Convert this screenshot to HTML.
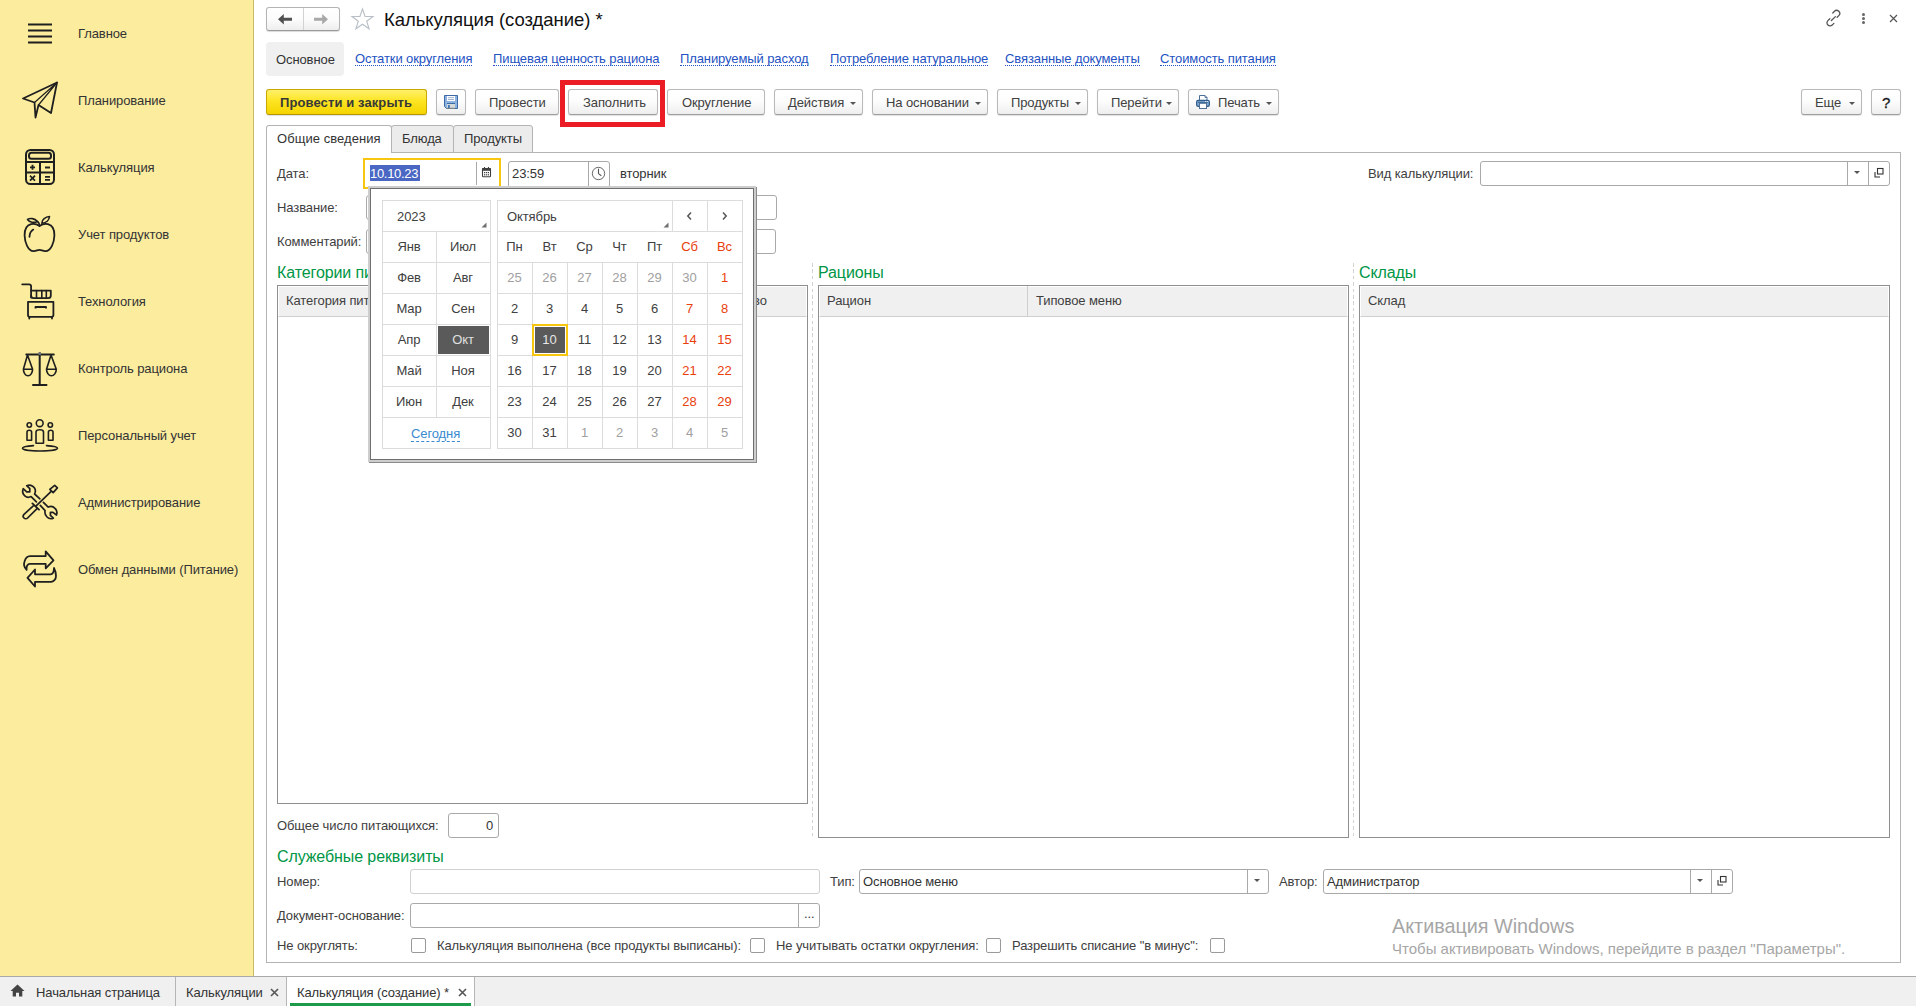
<!DOCTYPE html>
<html><head><meta charset="utf-8">
<style>
*{box-sizing:border-box;margin:0;padding:0}
html,body{width:1916px;height:1006px;overflow:hidden;background:#fff;font-family:"Liberation Sans",sans-serif;font-size:13px;color:#404040}
.a{position:absolute}
.t{position:absolute;white-space:nowrap;font-size:13px;line-height:15px;color:#404040;letter-spacing:-0.1px}
#side{position:absolute;left:0;top:0;width:254px;height:976px;background:#fbec9e;border-right:1px solid #c9b866}
.si{position:absolute;left:78px;font-size:13px;line-height:15px;color:#333;white-space:nowrap;letter-spacing:-0.1px}
.ico{position:absolute;left:20px;width:40px;height:40px}
.btn{position:absolute;top:89px;height:26px;border:1px solid #b9b9b9;border-bottom-color:#9d9d9d;border-radius:3px;background:linear-gradient(#ffffff 0%,#fdfdfd 45%,#eeeeee 100%);box-shadow:0 1px 1px rgba(0,0,0,.12)}
.btn span{position:absolute;top:5px;white-space:nowrap;font-size:13px;line-height:15px;color:#404040;letter-spacing:-0.1px}
.dd{position:absolute;top:12px;width:0;height:0;border-left:3px solid transparent;border-right:3px solid transparent;border-top:3px solid #555}
.lnk{position:absolute;top:51px;white-space:nowrap;font-size:13px;line-height:15px;color:#2452c2;letter-spacing:-0.1px;border-bottom:1px dotted #2452c2;height:15px}
.fld{position:absolute;border:1px solid #a9a9a9;border-radius:3px;background:#fff;height:24px}
.g{position:absolute;white-space:nowrap;font-size:16px;line-height:18px;color:#009646;letter-spacing:-0.1px}
.tbl{position:absolute;border:1px solid #8f8f8f;background:#fff}
.th{position:absolute;left:0;right:0;top:0;height:31px;background:#f0f0f0;border:1px solid #fff;border-bottom:1px solid #cfcfcf}
.cb{position:absolute;top:938px;width:15px;height:15px;border:1px solid #9a9a9a;border-radius:2px;background:#fff}
.dash{position:absolute;width:1px;background:repeating-linear-gradient(#d2d2d2 0 3.6px,transparent 3.6px 6.4px)}
</style></head><body>

<!-- SIDEBAR -->
<div id="side"></div>
<svg class="a" style="left:0;top:0" width="254" height="976" viewBox="0 0 254 976" fill="none" stroke="#1f1f1f" stroke-width="2" stroke-linejoin="round" stroke-linecap="round">
<!-- hamburger -->
<g stroke-width="1.8" stroke-linecap="butt"><path d="M28 24.5H52M28 30.5H52M28 36.5H52M28 42.5H52"/></g>
<!-- plane -->
<path d="M23 98.5L57 82.5L51 113L38.5 105L35.5 117.5L34.5 102.5Z" stroke-width="1.8"/>
<path d="M34.5 102.5L57 82.5M38.5 105L57 82.5" stroke-width="1.2"/>
<!-- calculator -->
<rect x="26" y="150" width="28" height="34" rx="4.5"/>
<rect x="29" y="152.8" width="22" height="6" rx="2.5"/>
<path d="M26 162H54M26 172.5H54M40 162V184"/>
<path d="M30 167.3H35M32.5 164.8V169.8M45 167.5H50M45 176.8H50M45 179.8H50" stroke-width="1.8" stroke-linecap="butt"/><path d="M30.6 176.3L34.4 180.1M34.4 176.3L30.6 180.1" stroke-width="1.7" stroke-linecap="square"/>
<!-- apple -->
<path d="M39.5 226C37 224.2 34 223.5 31 224.2C26.5 225.3 24.5 230 24.6 235.5C24.8 242.5 28 250.8 33.5 251.2C36 251.4 37.6 249.8 39.5 249.8C41.4 249.8 43 251.4 45.5 251.2C51 250.8 54.2 242.5 54.4 235.5C54.5 230 52.5 225.3 48 224.2C45 223.5 42 224.2 39.5 226Z" stroke-width="1.8"/>
<path d="M39.5 226C39.5 223.8 38.8 222.5 37.5 221.5" stroke-width="1.6"/>
<path d="M27.5 219.5C30 217.8 34.5 218.2 37.5 221.5C34 223.2 29.5 222.5 27.5 219.5Z" stroke-width="1.6"/>
<path d="M41.8 223.2C41.8 219.5 45.5 216.8 49.5 216.5C49.2 220.2 46.2 223 41.8 223.2Z" stroke-width="1.6"/>
<path d="M29.5 236.8C29.6 233.5 31 231 33.3 229.6" stroke-width="1.8"/>
<!-- technology -->
<path d="M22.2 284.3H29C30.3 284.3 31.1 285.2 31.1 286.5V297.5" stroke-width="1.8"/>
<path d="M31.1 290.6H50.8V295.5C50.8 297 49.8 298.2 48.2 298.2H33.6C32.2 298.2 31.1 297 31.1 295.5" stroke-width="1.8"/>
<path d="M36.5 290.6V298M41.8 290.6V298M46.3 290.6V298" stroke-width="1.6"/>
<path d="M28 301.8H53.4V315C53.4 316 52.6 316.8 51.6 316.8H29.8C28.8 316.8 28 316 28 315Z" stroke-width="1.8"/>
<path d="M29.3 316.8V318.5M52 316.8V318.5" stroke-width="1.8"/>
<path d="M35.5 308.5V307H46V308.5" stroke-width="1.8" stroke-linecap="butt"/>
<!-- scales -->
<path d="M39.7 353V384.5M33 385H46.5M26.3 354.5H53.8" stroke-width="2"/>
<path d="M27.5 355L23.4 369.3M27.5 355L32.6 369.3M23.4 369.3H32.6C32.6 372.8 30.5 375.8 28 375.8C25.5 375.8 23.4 372.8 23.4 369.3Z" stroke-width="1.6"/>
<path d="M51 355L46.5 369.3M51 355L56.3 369.3M46.5 369.3H56.3C56.3 372.8 54 375.8 51.4 375.8C48.8 375.8 46.5 372.8 46.5 369.3Z" stroke-width="1.6"/>
<circle cx="39.7" cy="353.5" r="1.6" fill="#777" stroke="none"/>
<!-- people -->
<circle cx="39.7" cy="423.2" r="3.4" stroke-width="1.6"/>
<circle cx="29.3" cy="425" r="2.2" stroke-width="1.6"/>
<circle cx="50.3" cy="425" r="2.2" stroke-width="1.6"/>
<path d="M36 443.3V432C36 430.5 37.5 429.8 39.8 429.8C42 429.8 43.5 430.5 43.5 432V443.3Z" stroke-width="1.6"/>
<path d="M27 440.3V432C27 431 28 430.3 29.3 430.3C30.6 430.3 31.6 431 31.6 432V440.3Z" stroke-width="1.6"/>
<path d="M48.4 440.3V432C48.4 431 49.4 430.3 50.7 430.3C52 430.3 53 431 53 432V440.3Z" stroke-width="1.6"/>
<path d="M33.5 445.6C26.5 446.1 22.5 447 22.5 448.2C22.5 449.8 30.3 451 40 451C49.7 451 57.5 449.8 57.5 448.2C57.5 447 53.5 446.1 46.5 445.6" stroke-width="1.6"/>
<!-- tools -->
<path d="M39.9 498.8L34.6 494C35.8 491.5 35.3 488.5 33.5 486.8C31.6 485 29 484.6 26.7 485.7L29.8 488.7V491.8H26.7L23.2 488.7C22.2 491.2 22.8 494 24.8 495.8C26.6 497.4 29 497.6 31.1 496.6L36.4 501.9" stroke-width="1.7"/>
<path d="M43.4 502.3L48.2 507.1C50.5 506 53.3 506.5 55 508.3C56.8 510.1 57.3 512.8 56.5 515L53 512.4H50.4V515.4L53.3 518.2C51.2 519.1 48.7 518.7 47 517C45.2 515.3 44.6 512.8 45.1 510.6L40.3 505.4" stroke-width="1.7"/>
<path d="M33.3 505.8L24 514.4C23 515.4 23 517 24 518C25 519 26.6 519 27.6 518L36.8 508.9" stroke-width="1.7"/>
<path d="M32.4 503.4L39 509.7" stroke-width="1.8"/>
<path d="M35.9 506.2L51.2 491.4" stroke-width="1.7"/>
<path d="M49.8 489.4L54.7 485.4L57.4 487.9L53.2 492.6Z" stroke-width="1.7"/>
<!-- exchange -->
<path d="M45.7 556.1V551.3L53.5 560.3L45.7 568.3V563.9H30C27.5 563.9 26.2 566.3 26.6 569.8C24.3 567.5 23.5 564.5 24.5 561.5C25.4 558.2 27.5 556.1 30 556.1Z" stroke-width="1.8"/>
<path d="M35 574.3V569.5L27.5 577.9L35 586.5V581.8H51C53.5 581.8 56 579.5 56 576C56 572.5 55 570 54 568C54 571.5 53 574.3 50.5 574.3Z" stroke-width="1.8"/>
</svg>
<div class="si" style="top:26px">Главное</div>
<div class="si" style="top:93px">Планирование</div>
<div class="si" style="top:160px">Калькуляция</div>
<div class="si" style="top:227px">Учет продуктов</div>
<div class="si" style="top:294px">Технология</div>
<div class="si" style="top:361px">Контроль рациона</div>
<div class="si" style="top:428px">Персональный учет</div>
<div class="si" style="top:495px">Администрирование</div>
<div class="si" style="top:562px">Обмен данными (Питание)</div>


<!-- TOP -->
<div id="top">
<!-- nav buttons -->
<div class="a" style="left:266px;top:7px;width:74px;height:24px;border:1px solid #b4b4b4;border-bottom-color:#9a9a9a;border-radius:3px;background:linear-gradient(#fff,#fcfcfc 50%,#eeeeee);box-shadow:0 1px 1px rgba(0,0,0,.15)"></div>
<div class="a" style="left:303px;top:8px;width:1px;height:22px;background:#d2d2d2"></div>
<svg class="a" style="left:276px;top:12px" width="20" height="14" viewBox="0 0 20 14"><path d="M2 7.3L7.8 2V5.8H16V8.8H7.8V12.6Z" fill="#505050"/></svg>
<svg class="a" style="left:312px;top:12px" width="20" height="14" viewBox="0 0 20 14"><path d="M16 7.3L10.2 2V5.8H2V8.8H10.2V12.6Z" fill="#a8a8a8"/></svg>
<!-- star -->
<svg class="a" style="left:350px;top:7px" width="26" height="25" viewBox="0 0 26 25"><path d="M12.5 2L15.1 9.5H23L16.7 14.2L19.1 21.8L12.5 17.2L5.9 21.8L8.3 14.2L2 9.5H9.9Z" fill="none" stroke="#b8bfc6" stroke-width="1.1" stroke-linejoin="miter"/></svg>
<div class="t" style="left:384px;top:9px;font-size:18.5px;line-height:22px;color:#111;letter-spacing:-0.05px">Калькуляция (создание) *</div>
<!-- top right icons -->
<svg class="a" style="left:1824px;top:9px" width="18.5" height="18.5" viewBox="0 0 20 20" fill="none" stroke="#555" stroke-width="1.4" stroke-linecap="round"><path d="M9.5 4.3L11.3 2.5C12.6 1.2 14.7 1.2 16 2.5C17.3 3.8 17.3 5.9 16 7.2L14.2 9"/><path d="M6.3 10.5L4.2 12.6C2.9 13.9 2.9 16 4.2 17.3C5.5 18.6 7.6 18.6 8.9 17.3L10.7 15.5"/><path d="M8 12.5L12.3 8.2"/></svg>
<div class="a" style="left:1862px;top:13px;width:3px;height:3px;border-radius:50%;background:#666"></div>
<div class="a" style="left:1862px;top:17px;width:3px;height:3px;border-radius:50%;background:#666"></div>
<div class="a" style="left:1862px;top:21px;width:3px;height:3px;border-radius:50%;background:#666"></div>
<svg class="a" style="left:1888px;top:13px" width="11" height="11" viewBox="0 0 11 11" stroke="#555" stroke-width="1.2"><path d="M2 2L9 9M9 2L2 9"/></svg>

<!-- links row -->
<div class="a" style="left:266px;top:42px;width:78px;height:34px;border-radius:4px;background:#f0f0f0"></div>
<div class="t" style="left:276px;top:52px;color:#333">Основное</div>
<div class="lnk" style="left:355px">Остатки округления</div>
<div class="lnk" style="left:493px">Пищевая ценность рациона</div>
<div class="lnk" style="left:680px">Планируемый расход</div>
<div class="lnk" style="left:830px">Потребление натуральное</div>
<div class="lnk" style="left:1005px">Связанные документы</div>
<div class="lnk" style="left:1160px">Стоимость питания</div>

<!-- toolbar -->
<div class="btn" style="left:266px;width:161px;border-color:#c9a800;border-bottom-color:#b39400;background:linear-gradient(#fff06a 0%,#fde523 45%,#f5d400 100%)"><span style="left:13px;font-weight:bold;color:#383838;letter-spacing:0.1px">Провести и закрыть</span></div>
<div class="btn" style="left:436px;width:30px">
<svg class="a" style="left:7px;top:5px" width="15" height="15" viewBox="0 0 15 15"><path d="M0.5 0.5H13.5V13.5H2.5L0.5 11.5Z" fill="#8cb3e0" stroke="#3d69a5"/><rect x="3" y="1" width="8" height="5" fill="#fff"/><path d="M4 2.7H10M4 4.5H10" stroke="#93aac8" stroke-width="0.9"/><rect x="3" y="8.8" width="8" height="4.7" fill="#d3d9d8"/><path d="M3 8.5H11" stroke="#3d69a5"/><rect x="4" y="10" width="1.8" height="3.2" fill="#3f75bb"/><path d="M3 13.3H11" stroke="#707070" stroke-width="0.8"/></svg>
</div>
<div class="btn" style="left:475px;width:84px"><span style="left:13px">Провести</span></div>
<div class="a" style="left:560px;top:80px;width:105px;height:47px;border:5px solid #ec1c24"></div>
<div class="btn" style="left:568px;width:90px"><span style="left:14px">Заполнить</span></div>
<div class="btn" style="left:667px;width:98px"><span style="left:14px">Округление</span></div>
<div class="btn" style="left:774px;width:89px"><span style="left:13px">Действия</span><i class="dd" style="left:75px"></i></div>
<div class="btn" style="left:872px;width:116px"><span style="left:13px">На основании</span><i class="dd" style="left:102px"></i></div>
<div class="btn" style="left:997px;width:91px"><span style="left:13px">Продукты</span><i class="dd" style="left:77px"></i></div>
<div class="btn" style="left:1097px;width:82px"><span style="left:13px">Перейти</span><i class="dd" style="left:68px"></i></div>
<div class="btn" style="left:1188px;width:91px">
<svg class="a" style="left:7px;top:5px" width="15" height="15" viewBox="0 0 15 15"><path d="M3.5 0.5H9L11 2.5V5.5H3.5Z" fill="#fff" stroke="#4d7099"/><path d="M9 0.5V2.5H11" fill="none" stroke="#4d7099" stroke-width="0.9"/><rect x="0.6" y="5.4" width="12.8" height="6" rx="1.6" fill="#87aad2" stroke="#2f5d8c" stroke-width="1.2"/><path d="M2 7.3H12" stroke="#2f5d8c"/><rect x="9.2" y="6.1" width="1" height="1" fill="#fff"/><rect x="11.1" y="6.1" width="1" height="1" fill="#fff"/><rect x="3.5" y="8.3" width="7" height="5.2" fill="#fff" stroke="#4d7099"/></svg>
<span style="left:29px">Печать</span><i class="dd" style="left:77px"></i></div>
<div class="btn" style="left:1801px;width:61px"><span style="left:13px">Еще</span><i class="dd" style="left:47px"></i></div>
<div class="btn" style="left:1871px;width:30px"><span style="left:10px;top:5px;font-size:15px;line-height:15px;color:#1a1a1a;-webkit-text-stroke:0.35px #1a1a1a">?</span></div>
</div>


<!-- PANEL -->
<div id="panel">
<!-- tabs -->
<div class="a" style="left:266px;top:152px;width:1635px;height:811px;border:1px solid #b4b4b4"></div>
<div class="a" style="left:391px;top:125px;width:63px;height:28px;background:#ececec;border:1px solid #b4b4b4;border-radius:3px 3px 0 0"></div>
<div class="a" style="left:453px;top:125px;width:80px;height:28px;background:#ececec;border:1px solid #b4b4b4;border-radius:3px 3px 0 0"></div>
<div class="a" style="left:266px;top:125px;width:126px;height:28px;background:#fff;border:1px solid #b4b4b4;border-bottom:none;border-radius:3px 3px 0 0"></div>
<div class="t" style="left:277px;top:131px;color:#333;letter-spacing:0.05px">Общие сведения</div>
<div class="t" style="left:402px;top:131px;color:#333">Блюда</div>
<div class="t" style="left:464px;top:131px;color:#333">Продукты</div>

<!-- fields row -->
<div class="t" style="left:277px;top:166px">Дата:</div>
<div class="a" style="left:363px;top:158px;width:138px;height:31px;border:2px solid #f8c60e"></div>
<div class="a" style="left:365px;top:160px;width:134px;height:27px;background:#fff"></div>
<div class="a" style="left:476px;top:162px;width:1px;height:23px;background:#a9a9a9"></div>
<div class="a" style="left:370px;top:165px;width:50px;height:16px;background:#4a67c4"></div>
<div class="t" style="left:370px;top:166px;color:#fff;letter-spacing:-0.3px">10.10.23</div>
<svg class="a" style="left:481px;top:166px" width="11" height="12" viewBox="0 0 11 12"><rect x="1.5" y="2.5" width="8" height="8.3" rx="0.8" fill="#fff" stroke="#404040" stroke-width="1.1"/><rect x="1.2" y="2.2" width="8.6" height="2.6" fill="#404040"/><path d="M3.5 1V3M7.5 1V3" stroke="#404040" stroke-width="1.1"/><g fill="#404040"><rect x="3" y="6" width="1.2" height="1.2"/><rect x="4.9" y="6" width="1.2" height="1.2"/><rect x="6.8" y="6" width="1.2" height="1.2"/><rect x="3" y="8.2" width="1.2" height="1.2"/><rect x="4.9" y="8.2" width="1.2" height="1.2"/><rect x="6.8" y="8.2" width="1.2" height="1.2"/></g></svg>

<div class="fld" style="left:508px;top:161px;width:102px;height:27px"></div>
<div class="a" style="left:588px;top:162px;width:1px;height:25px;background:#a9a9a9"></div>
<div class="t" style="left:512px;top:166px;color:#333">23:59</div>
<svg class="a" style="left:591px;top:166px" width="15" height="15" viewBox="0 0 15 15" fill="none" stroke="#6a6a6a"><circle cx="7.5" cy="7.5" r="6.2" stroke-width="1"/><path d="M7.50 2.30L7.50 1.30M10.10 3.00L10.60 2.13M12.00 4.90L12.87 4.40M12.70 7.50L13.70 7.50M12.00 10.10L12.87 10.60M10.10 12.00L10.60 12.87M7.50 12.70L7.50 13.70M4.90 12.00L4.40 12.87M3.00 10.10L2.13 10.60M2.30 7.50L1.30 7.50M3.00 4.90L2.13 4.40M4.90 3.00L4.40 2.13" stroke-width="0.6" stroke="#999"/><path d="M7.5 2.8V7.6L10.3 9.8" stroke-width="1.1" stroke="#555"/></svg>
<div class="t" style="left:620px;top:166px;color:#333">вторник</div>

<div class="t" style="left:1368px;top:166px">Вид калькуляции:</div>
<div class="fld" style="left:1480px;top:161px;width:410px;height:25px"></div>
<div class="a" style="left:1847px;top:162px;width:1px;height:23px;background:#a9a9a9"></div>
<div class="a" style="left:1868px;top:162px;width:1px;height:23px;background:#a9a9a9"></div>
<i class="dd" style="left:1854px;top:171px"></i>
<svg class="a" style="left:1873px;top:167px" width="12" height="12" viewBox="0 0 12 12" fill="none" stroke="#333" stroke-width="1.1"><rect x="4.5" y="1.5" width="5.5" height="5.5"/><path d="M2 5V10H7"/></svg>

<div class="t" style="left:277px;top:200px">Название:</div>
<div class="fld" style="left:366px;top:195px;width:411px;height:25px"></div>
<div class="t" style="left:277px;top:234px">Комментарий:</div>
<div class="fld" style="left:366px;top:229px;width:410px;height:25px"></div>

<!-- group titles -->
<div class="g" style="left:277px;top:264px">Категории питающихся</div>
<div class="g" style="left:818px;top:264px">Рационы</div>
<div class="g" style="left:1359px;top:264px">Склады</div>
<div class="dash" style="left:812px;top:263px;height:575px"></div>
<div class="dash" style="left:1353px;top:263px;height:575px"></div>

<!-- tables -->
<div class="tbl" style="left:277px;top:285px;width:531px;height:519px"><div class="th"></div></div>
<div class="t" style="left:286px;top:293px">Категория питающихся</div>
<div class="t" style="left:698px;top:293px">Количество</div>

<div class="tbl" style="left:818px;top:285px;width:531px;height:553px"><div class="th"></div></div>
<div class="a" style="left:1027px;top:286px;width:1px;height:30px;background:#cfcfcf"></div>
<div class="t" style="left:827px;top:293px">Рацион</div>
<div class="t" style="left:1036px;top:293px">Типовое меню</div>

<div class="tbl" style="left:1359px;top:285px;width:531px;height:553px"><div class="th"></div></div>
<div class="t" style="left:1368px;top:293px">Склад</div>

<!-- total -->
<div class="t" style="left:277px;top:818px">Общее число питающихся:</div>
<div class="fld" style="left:448px;top:813px;width:51px;height:25px"></div>
<div class="t" style="left:486px;top:818px;color:#333">0</div>

<div class="g" style="left:277px;top:848px">Служебные реквизиты</div>
<div class="t" style="left:277px;top:874px">Номер:</div>
<div class="fld" style="left:410px;top:869px;width:410px;height:25px;border-color:#d0d0d0"></div>
<div class="t" style="left:830px;top:874px">Тип:</div>
<div class="fld" style="left:859px;top:869px;width:410px;height:25px"></div>
<div class="a" style="left:1247px;top:870px;width:1px;height:23px;background:#a9a9a9"></div>
<i class="dd" style="left:1254px;top:879px"></i>
<div class="t" style="left:863px;top:874px;color:#333">Основное меню</div>
<div class="t" style="left:1279px;top:874px">Автор:</div>
<div class="fld" style="left:1323px;top:869px;width:410px;height:25px"></div>
<div class="a" style="left:1690px;top:870px;width:1px;height:23px;background:#a9a9a9"></div>
<div class="a" style="left:1711px;top:870px;width:1px;height:23px;background:#a9a9a9"></div>
<i class="dd" style="left:1697px;top:879px"></i>
<svg class="a" style="left:1716px;top:875px" width="12" height="12" viewBox="0 0 12 12" fill="none" stroke="#333" stroke-width="1.1"><rect x="4.5" y="1.5" width="5.5" height="5.5"/><path d="M2 5V10H7"/></svg>
<div class="t" style="left:1327px;top:874px;color:#333">Администратор</div>

<div class="t" style="left:277px;top:908px">Документ-основание:</div>
<div class="fld" style="left:410px;top:903px;width:410px;height:25px"></div>
<div class="a" style="left:798px;top:904px;width:1px;height:23px;background:#a9a9a9"></div>
<div class="t" style="left:804px;top:906px;color:#333">...</div>

<div class="t" style="left:277px;top:938px">Не округлять:</div>
<div class="cb" style="left:411px"></div>
<div class="t" style="left:437px;top:938px">Калькуляция выполнена (все продукты выписаны):</div>
<div class="cb" style="left:750px"></div>
<div class="t" style="left:776px;top:938px">Не учитывать остатки округления:</div>
<div class="cb" style="left:986px"></div>
<div class="t" style="left:1012px;top:938px">Разрешить списание "в минус":</div>
<div class="cb" style="left:1210px"></div>

<!-- windows watermark -->
<div class="t" style="left:1392px;top:915px;font-size:19.8px;line-height:23px;color:#a6a6a6;letter-spacing:0">Активация Windows</div>
<div class="t" style="left:1392px;top:940px;font-size:15px;line-height:17px;color:#a6a6a6;letter-spacing:0">Чтобы активировать Windows, перейдите в раздел "Параметры".</div>
</div>


<!-- POPUP -->
<div id="popup">
<div class="a" style="left:368px;top:186px;width:388px;height:276px;background:#cdcdcd;box-shadow:1px 1px 0 #8a8a8a"></div>
<div class="a" style="left:370px;top:188px;width:384px;height:272px;background:#fff;border:1px solid #6f6f6f"></div>
<div class="a" style="left:382px;top:200px;width:109px;height:249px;border:1px solid #dcdcdc"></div>
<div class="a" style="left:382px;top:231px;width:109px;height:1px;background:#dcdcdc"></div>
<div class="a" style="left:382px;top:262px;width:109px;height:1px;background:#dcdcdc"></div>
<div class="a" style="left:382px;top:293px;width:109px;height:1px;background:#dcdcdc"></div>
<div class="a" style="left:382px;top:324px;width:109px;height:1px;background:#dcdcdc"></div>
<div class="a" style="left:382px;top:355px;width:109px;height:1px;background:#dcdcdc"></div>
<div class="a" style="left:382px;top:386px;width:109px;height:1px;background:#dcdcdc"></div>
<div class="a" style="left:382px;top:417px;width:109px;height:1px;background:#dcdcdc"></div>
<div class="a" style="left:436px;top:231px;width:1px;height:187px;background:#dcdcdc"></div>
<div class="a" style="left:497px;top:200px;width:246px;height:249px;border:1px solid #dcdcdc"></div>
<div class="a" style="left:497px;top:231px;width:246px;height:1px;background:#dcdcdc"></div>
<div class="a" style="left:497px;top:262px;width:246px;height:1px;background:#dcdcdc"></div>
<div class="a" style="left:497px;top:293px;width:246px;height:1px;background:#dcdcdc"></div>
<div class="a" style="left:497px;top:324px;width:246px;height:1px;background:#dcdcdc"></div>
<div class="a" style="left:497px;top:355px;width:246px;height:1px;background:#dcdcdc"></div>
<div class="a" style="left:497px;top:386px;width:246px;height:1px;background:#dcdcdc"></div>
<div class="a" style="left:497px;top:417px;width:246px;height:1px;background:#dcdcdc"></div>
<div class="a" style="left:672px;top:200px;width:1px;height:31px;background:#dcdcdc"></div>
<div class="a" style="left:707px;top:200px;width:1px;height:31px;background:#dcdcdc"></div>
<div class="a" style="left:532px;top:262px;width:1px;height:186px;background:#dcdcdc"></div>
<div class="a" style="left:567px;top:262px;width:1px;height:186px;background:#dcdcdc"></div>
<div class="a" style="left:602px;top:262px;width:1px;height:186px;background:#dcdcdc"></div>
<div class="a" style="left:637px;top:262px;width:1px;height:186px;background:#dcdcdc"></div>
<div class="a" style="left:672px;top:262px;width:1px;height:186px;background:#dcdcdc"></div>
<div class="a" style="left:707px;top:262px;width:1px;height:186px;background:#dcdcdc"></div>
<div class="a" style="left:438px;top:326px;width:51px;height:28px;background:#5a5a5a"></div>
<div class="a" style="left:532px;top:324px;width:36px;height:32px;border:2px solid #f8c60e;background:#fff"></div>
<div class="a" style="left:535px;top:327px;width:30px;height:26px;background:#5a5a5a"></div>
<div class="t" style="left:397px;top:209px;color:#404040">2023</div>
<div class="t" style="left:507px;top:209px;color:#404040">Октябрь</div>
<svg class="a" style="left:481px;top:222px" width="6" height="6"><path d="M5.5 0.5V5.5H0.5Z" fill="#707070"/></svg>
<svg class="a" style="left:663px;top:222px" width="6" height="6"><path d="M5.5 0.5V5.5H0.5Z" fill="#707070"/></svg>
<svg class="a" style="left:685px;top:211px" width="9" height="10" viewBox="0 0 9 10"><path d="M6 1.5L2.8 5L6 8.5" fill="none" stroke="#555" stroke-width="1.5"/></svg>
<svg class="a" style="left:720px;top:211px" width="9" height="10" viewBox="0 0 9 10"><path d="M3 1.5L6.2 5L3 8.5" fill="none" stroke="#555" stroke-width="1.5"/></svg>
<div class="t" style="left:349px;width:120px;text-align:center;top:239px;color:#404040;">Янв</div>
<div class="t" style="left:403px;width:120px;text-align:center;top:239px;color:#404040;">Июл</div>
<div class="t" style="left:349px;width:120px;text-align:center;top:270px;color:#404040;">Фев</div>
<div class="t" style="left:403px;width:120px;text-align:center;top:270px;color:#404040;">Авг</div>
<div class="t" style="left:349px;width:120px;text-align:center;top:301px;color:#404040;">Мар</div>
<div class="t" style="left:403px;width:120px;text-align:center;top:301px;color:#404040;">Сен</div>
<div class="t" style="left:349px;width:120px;text-align:center;top:332px;color:#404040;">Апр</div>
<div class="t" style="left:403px;width:120px;text-align:center;top:332px;color:#e0e0e0;">Окт</div>
<div class="t" style="left:349px;width:120px;text-align:center;top:363px;color:#404040;">Май</div>
<div class="t" style="left:403px;width:120px;text-align:center;top:363px;color:#404040;">Ноя</div>
<div class="t" style="left:349px;width:120px;text-align:center;top:394px;color:#404040;">Июн</div>
<div class="t" style="left:403px;width:120px;text-align:center;top:394px;color:#404040;">Дек</div>
<div class="t" style="left:411px;top:426px;color:#3a8ad0;border-bottom:1px dashed #3a8ad0;height:16px">Сегодня</div>
<div class="t" style="left:454.5px;width:120px;text-align:center;top:239px;color:#404040;">Пн</div>
<div class="t" style="left:489.5px;width:120px;text-align:center;top:239px;color:#404040;">Вт</div>
<div class="t" style="left:524.5px;width:120px;text-align:center;top:239px;color:#404040;">Ср</div>
<div class="t" style="left:559.5px;width:120px;text-align:center;top:239px;color:#404040;">Чт</div>
<div class="t" style="left:594.5px;width:120px;text-align:center;top:239px;color:#404040;">Пт</div>
<div class="t" style="left:629.5px;width:120px;text-align:center;top:239px;color:#e8400c;">Сб</div>
<div class="t" style="left:664.5px;width:120px;text-align:center;top:239px;color:#e8400c;">Вс</div>
<div class="t" style="left:454.5px;width:120px;text-align:center;top:270px;color:#a0a0a0;">25</div>
<div class="t" style="left:489.5px;width:120px;text-align:center;top:270px;color:#a0a0a0;">26</div>
<div class="t" style="left:524.5px;width:120px;text-align:center;top:270px;color:#a0a0a0;">27</div>
<div class="t" style="left:559.5px;width:120px;text-align:center;top:270px;color:#a0a0a0;">28</div>
<div class="t" style="left:594.5px;width:120px;text-align:center;top:270px;color:#a0a0a0;">29</div>
<div class="t" style="left:629.5px;width:120px;text-align:center;top:270px;color:#a0a0a0;">30</div>
<div class="t" style="left:664.5px;width:120px;text-align:center;top:270px;color:#e8400c;">1</div>
<div class="t" style="left:454.5px;width:120px;text-align:center;top:301px;color:#404040;">2</div>
<div class="t" style="left:489.5px;width:120px;text-align:center;top:301px;color:#404040;">3</div>
<div class="t" style="left:524.5px;width:120px;text-align:center;top:301px;color:#404040;">4</div>
<div class="t" style="left:559.5px;width:120px;text-align:center;top:301px;color:#404040;">5</div>
<div class="t" style="left:594.5px;width:120px;text-align:center;top:301px;color:#404040;">6</div>
<div class="t" style="left:629.5px;width:120px;text-align:center;top:301px;color:#e8400c;">7</div>
<div class="t" style="left:664.5px;width:120px;text-align:center;top:301px;color:#e8400c;">8</div>
<div class="t" style="left:454.5px;width:120px;text-align:center;top:332px;color:#404040;">9</div>
<div class="t" style="left:489.5px;width:120px;text-align:center;top:332px;color:#e6e6e6;">10</div>
<div class="t" style="left:524.5px;width:120px;text-align:center;top:332px;color:#404040;">11</div>
<div class="t" style="left:559.5px;width:120px;text-align:center;top:332px;color:#404040;">12</div>
<div class="t" style="left:594.5px;width:120px;text-align:center;top:332px;color:#404040;">13</div>
<div class="t" style="left:629.5px;width:120px;text-align:center;top:332px;color:#e8400c;">14</div>
<div class="t" style="left:664.5px;width:120px;text-align:center;top:332px;color:#e8400c;">15</div>
<div class="t" style="left:454.5px;width:120px;text-align:center;top:363px;color:#404040;">16</div>
<div class="t" style="left:489.5px;width:120px;text-align:center;top:363px;color:#404040;">17</div>
<div class="t" style="left:524.5px;width:120px;text-align:center;top:363px;color:#404040;">18</div>
<div class="t" style="left:559.5px;width:120px;text-align:center;top:363px;color:#404040;">19</div>
<div class="t" style="left:594.5px;width:120px;text-align:center;top:363px;color:#404040;">20</div>
<div class="t" style="left:629.5px;width:120px;text-align:center;top:363px;color:#e8400c;">21</div>
<div class="t" style="left:664.5px;width:120px;text-align:center;top:363px;color:#e8400c;">22</div>
<div class="t" style="left:454.5px;width:120px;text-align:center;top:394px;color:#404040;">23</div>
<div class="t" style="left:489.5px;width:120px;text-align:center;top:394px;color:#404040;">24</div>
<div class="t" style="left:524.5px;width:120px;text-align:center;top:394px;color:#404040;">25</div>
<div class="t" style="left:559.5px;width:120px;text-align:center;top:394px;color:#404040;">26</div>
<div class="t" style="left:594.5px;width:120px;text-align:center;top:394px;color:#404040;">27</div>
<div class="t" style="left:629.5px;width:120px;text-align:center;top:394px;color:#e8400c;">28</div>
<div class="t" style="left:664.5px;width:120px;text-align:center;top:394px;color:#e8400c;">29</div>
<div class="t" style="left:454.5px;width:120px;text-align:center;top:425px;color:#404040;">30</div>
<div class="t" style="left:489.5px;width:120px;text-align:center;top:425px;color:#404040;">31</div>
<div class="t" style="left:524.5px;width:120px;text-align:center;top:425px;color:#a0a0a0;">1</div>
<div class="t" style="left:559.5px;width:120px;text-align:center;top:425px;color:#a0a0a0;">2</div>
<div class="t" style="left:594.5px;width:120px;text-align:center;top:425px;color:#a0a0a0;">3</div>
<div class="t" style="left:629.5px;width:120px;text-align:center;top:425px;color:#a0a0a0;">4</div>
<div class="t" style="left:664.5px;width:120px;text-align:center;top:425px;color:#a0a0a0;">5</div>
</div>

<!-- BOTTOM BAR -->
<div id="bar">
<div class="a" style="left:0;top:976px;width:1916px;height:30px;background:#f0f0f0;border-top:1px solid #a9a9a9"></div>
<svg class="a" style="left:10px;top:984px" width="15" height="13" viewBox="0 0 15 13"><path d="M7.5 0.5L14.5 7H12.3V12.5H9V8.8H6V12.5H2.7V7H0.5Z" fill="#444"/></svg>
<div class="t" style="left:36px;top:985px;color:#333">Начальная страница</div>
<div class="a" style="left:175px;top:977px;width:1px;height:29px;background:#b5b5b5"></div>
<div class="t" style="left:186px;top:985px;color:#333">Калькуляции</div>
<svg class="a" style="left:270px;top:988px" width="9" height="9" viewBox="0 0 9 9"><path d="M1 1L8 8M8 1L1 8" stroke="#555" stroke-width="1.6"/></svg>
<div class="a" style="left:286px;top:977px;width:189px;height:29px;background:#fff;border-left:1px solid #b5b5b5;border-right:1px solid #b5b5b5"></div>
<div class="a" style="left:290px;top:1003px;width:181px;height:3px;background:#1d9a4a"></div>
<div class="t" style="left:297px;top:985px;color:#333">Калькуляция (создание) *</div>
<svg class="a" style="left:458px;top:988px" width="9" height="9" viewBox="0 0 9 9"><path d="M1 1L8 8M8 1L1 8" stroke="#555" stroke-width="1.6"/></svg>
</div>

</body></html>
